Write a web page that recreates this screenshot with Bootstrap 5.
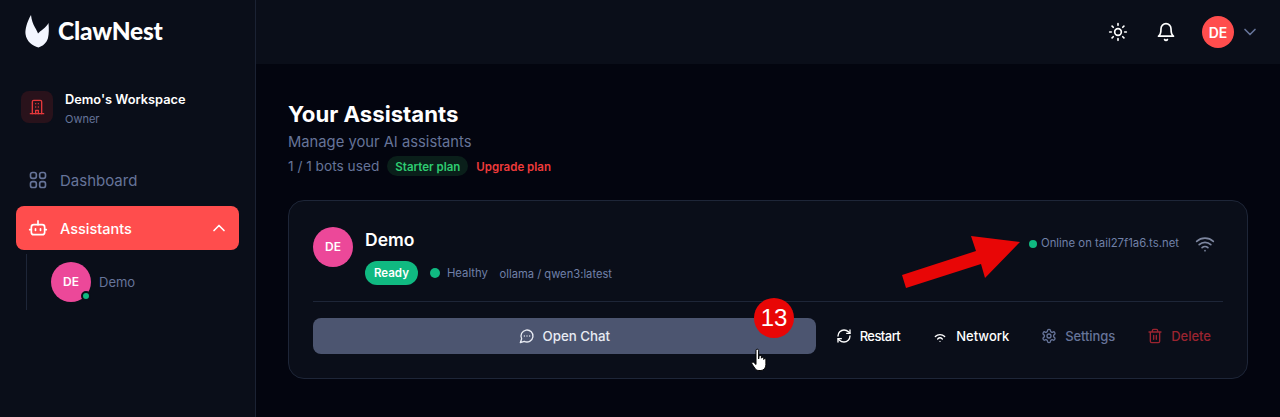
<!DOCTYPE html>
<html>
  <head>
    <title>ClawNest - Your Assistants</title>
    <link rel="stylesheet" href="https://cdn.jsdelivr.net/npm/bootstrap@5.3.3/dist/css/bootstrap.min.css" />
    <style>
      html, body { height: 100%; }
      body { background: #03050f; font-family: "Inter", "Liberation Sans", sans-serif; color: #fff; overflow: hidden; }
      svg.ico { fill: none; stroke: currentColor; stroke-width: 2; stroke-linecap: round; stroke-linejoin: round; flex-shrink: 0; }
      .app-shell { height: 417px; }
      .side-panel { width: 256px; background: #0a0e19; border-right: 1px solid #1b2233; flex-shrink: 0; }
      .brand-row { height: 62px; padding-left: 25px; gap: 9px; }
      .brand-name { font-family: "Lato", sans-serif; font-size: 24.5px; font-weight: 900; letter-spacing: -.2px; }
      .work-row { margin: 29px 21px 0; gap: 12px; }
      .work-icon { width: 32px; height: 32px; border-radius: 8px; background: #29121b; color: #e5383b; }
      .work-name { font-size: 12.8px; font-weight: 600; line-height: 18px; }
      .work-role { font-size: 11px; line-height: 16px; margin-top: 2px; color: #667499; }
      .side-nav { margin-top: 31px; padding: 0 16px; }
      .side-link { height: 44px; padding: 0 10px 0 12px; gap: 12px; font-size: 15px; color: #667499; border-radius: 8px; }
      .side-link.is-on { background: #ff4d4d; color: #fff; font-size: 14.5px; font-weight: 500; margin-top: 4px; }
      .sub-list { margin: 4px 0 0 10px; padding: 8px 0 8px 24px; border-left: 1px solid #1e2638; gap: 8px; font-size: 13px; color: #667499; }
      .txt-low { padding-top: 2px; }
      .ava { border-radius: 50%; color: #fff; font-weight: 600; }
      .ava-pink { width: 40px; height: 40px; background: #ec4899; font-size: 12px; }
      .ava-red { width: 32px; height: 32px; background: #ff4d4d; font-size: 14px; }
      .ava-dot { position: absolute; right: 0; bottom: 1px; width: 10px; height: 10px; border-radius: 50%; background: #10b981; border: 2px solid #0a0e19; }
      .top-strip { height: 64px; background: #0a0e19; padding-right: 20px; color: #fff; }
      .bell-ico { margin: 0 26px 0 28px; }
      .chev-ico { margin-left: 6px; }
      .main-pane { padding: 32px 32px 0; }
      .page-title { font-size: 22.2px; font-weight: 700; line-height: 35px; margin: 0 0 1px; }
      .page-sub { font-size: 14.75px; line-height: 20px; color: #667499; }
      .usage-row { margin-top: 4px; gap: 8px; font-size: 13.7px; color: #667499; height: 20px; }
      .plan-pill { background: #0a1f1a; color: #2ecc71; font-size: 11.5px; font-weight: 600; border-radius: 10px; padding: 2px 8px 0; line-height: 18px; }
      .plan-link { color: #ef3b3b; font-size: 11.5px; font-weight: 600; padding-top: 3px; }
      .bot-panel { margin-top: 24px; background: #0a0e19; border: 1px solid #1e2638; border-radius: 16px; padding: 24px; height: 179px; }
      .bot-avatar { margin-top: 2px; }
      .bot-info { margin-left: 12px; }
      .bot-name { font-size: 17.5px; font-weight: 600; line-height: 28px; margin-top: 1px; }
      .bot-meta { margin-top: 7px; }
      .ready-pill { background: #10b981; font-size: 11.5px; font-weight: 600; border-radius: 12px; height: 24px; padding: 2px 9px 0; }
      .meta-txt { font-size: 11.35px; color: #7080a8; }
      .dot-ok { border-radius: 50%; background: #10b981; }
      .dot-lg { width: 10px; height: 10px; margin: 0 7px 0 12px; }
      .dot-sm { width: 8px; height: 8px; margin-right: 4px; }
      .model-txt { margin-left: 11.5px; font-size: 11.2px; }
      .online-box { margin: 9px 8px 0 0; }
      .wifi-ico { margin-left: 16px; color: #7d869f; }
      .rule-line { border-top: 1px solid #1e2638; margin: 16px 0; opacity: 1; }
      .act-chat { height: 36px; background: #4c5570; border-radius: 8px; font-size: 13.3px; font-weight: 500; color: #e8ebf3; gap: 8px; }
      .act-btn { height: 36px; padding: 0 12px; gap: 8px; font-size: 13px; font-weight: 500; }
      .act-tight { letter-spacing: -.55px; }
      .act-snug { letter-spacing: -.1px; }
      .tone-white { color: #fff; }
      .tone-muted { color: #667499; }
      .tone-danger { color: #9b2430; }
      .mark-arrow { position: absolute; left: 0; top: 0; pointer-events: none; }
      .step-badge { position: absolute; left: 754px; top: 298px; width: 40px; height: 40px; border-radius: 50%; background: #e80606; color: #fff; font-family: "Liberation Sans", sans-serif; font-size: 24px; }
    </style>
  </head>
  <body>
    <div class="app-shell d-flex">
      <aside class="side-panel">
        <div class="brand-row d-flex align-items-center">
          <svg width="24" height="33" viewBox="0 0 24 33"><path fill="#f3f6ff" d="M6 0C6.500 5 8 9 10 12.500C11.500 15 12.500 17 13 18.500C15.500 15.500 21 13 23.500 8C24 14 24 18 23 23C21.500 28 18 31 13.500 32.500C7.500 31 1.500 26.500 .5 19C0 14 2 7 6 0Z"/></svg>
          <span class="brand-name">ClawNest</span>
        </div>
        <div class="work-row d-flex align-items-start">
          <div class="work-icon d-flex align-items-center justify-content-center">
            <svg class="ico" width="16" height="16" viewBox="0 0 24 24"><path d="M2 22h20"/><path d="M5 22V4a2 2 0 0 1 2-2h10a2 2 0 0 1 2 2v18"/><path d="M10 7h.01M14 7h.01M10 12h.01M14 12h.01"/><path d="M10 22v-5h4v5"/></svg>
          </div>
          <div>
            <div class="work-name">Demo's Workspace</div>
            <div class="work-role">Owner</div>
          </div>
        </div>
        <nav class="side-nav">
          <div class="side-link d-flex align-items-center">
            <svg class="ico" width="20" height="20" viewBox="0 0 24 24"><rect x="3" y="3" width="7" height="7" rx="2.500"/><rect x="14" y="3" width="7" height="7" rx="2.500"/><rect x="3" y="14" width="7" height="7" rx="2.500"/><rect x="14" y="14" width="7" height="7" rx="2.500"/></svg>
            <span class="txt-low">Dashboard</span>
          </div>
          <div class="side-link is-on d-flex align-items-center">
            <svg class="ico" width="20" height="20" viewBox="0 0 24 24"><path d="M12 8V3.500"/><rect x="4" y="8" width="16" height="12" rx="3"/><path d="M2 14h2M20 14h2M15 13v2M9 13v2"/></svg>
            <span class="flex-grow-1 txt-low">Assistants</span>
            <svg class="ico" width="20" height="20" viewBox="0 0 24 24"><path d="m18 15-6-6-6 6"/></svg>
          </div>
          <div class="sub-list d-flex align-items-center">
            <div class="position-relative">
              <div class="ava ava-pink d-flex align-items-center justify-content-center">DE</div>
              <span class="ava-dot"></span>
            </div>
            <span class="txt-low">Demo</span>
          </div>
        </nav>
      </aside>

      <div class="flex-grow-1">
        <header class="top-strip d-flex align-items-center justify-content-end">
          <svg class="ico" width="20" height="20" viewBox="0 0 24 24"><circle cx="12" cy="12" r="4"/><path d="M12 2v2M12 20v2M4.900 4.900l1.400 1.400M17.700 17.700l1.400 1.400M2 12h2M20 12h2M6.300 17.700l-1.400 1.400M19.100 4.900l-1.400 1.400"/></svg>
          <svg class="ico bell-ico" width="20" height="20" viewBox="0 0 24 24"><path d="M6 8a6 6 0 0 1 12 0c0 7 3 9 3 9H3s3-2 3-9"/><path d="M10.300 21a1.940 1.940 0 0 0 3.400 0"/></svg>
          <div class="ava ava-red d-flex align-items-center justify-content-center">DE</div>
          <svg class="ico tone-muted chev-ico" width="20" height="20" viewBox="0 0 24 24"><path d="m6 9 6 6 6-6"/></svg>
        </header>

        <main class="main-pane">
          <h1 class="page-title">Your Assistants</h1>
          <div class="page-sub">Manage your AI assistants</div>
          <div class="usage-row d-flex align-items-center">
            <span>1 / 1 bots used</span>
            <span class="plan-pill">Starter plan</span>
            <span class="plan-link">Upgrade plan</span>
          </div>

          <section class="bot-panel">
            <div class="d-flex align-items-start">
              <div class="ava ava-pink bot-avatar d-flex align-items-center justify-content-center">DE</div>
              <div class="bot-info flex-grow-1">
                <div class="bot-name">Demo</div>
                <div class="bot-meta d-flex align-items-center">
                  <span class="ready-pill d-flex align-items-center">Ready</span>
                  <span class="dot-ok dot-lg"></span>
                  <span class="meta-txt txt-low">Healthy</span>
                  <span class="meta-txt model-txt txt-low">ollama / qwen3:latest</span>
                </div>
              </div>
              <div class="online-box d-flex align-items-center meta-txt">
                <span class="dot-ok dot-sm"></span>
                <span>Online on tail27f1a6.ts.net</span>
                <svg class="ico wifi-ico" width="20" height="20" viewBox="0 0 24 24"><path d="M12 20h.01M2 8.820a15 15 0 0 1 20 0M5 12.859a10 10 0 0 1 14 0M8.500 16.429a5 5 0 0 1 7 0"/></svg>
              </div>
            </div>
            <hr class="rule-line">
            <div class="d-flex align-items-center gap-2">
              <div class="act-chat flex-grow-1 d-flex align-items-center justify-content-center">
                <svg class="ico" width="16" height="16" viewBox="0 0 24 24"><path d="M7.900 20A9 9 0 1 0 4 16.100L2 22Z"/><path d="M8 12h.01M12 12h.01M16 12h.01"/></svg>
                <span class="txt-low">Open Chat</span>
              </div>
              <div class="act-btn tone-white d-flex align-items-center">
                <svg class="ico" width="16" height="16" viewBox="0 0 24 24"><path d="M3 12a9 9 0 0 1 9-9 9.750 9.750 0 0 1 6.740 2.740L21 8"/><path d="M21 3v5h-5"/><path d="M21 12a9 9 0 0 1-9 9 9.750 9.750 0 0 1-6.740-2.740L3 16"/><path d="M8 16H3v5"/></svg>
                <span class="txt-low act-tight">Restart</span>
              </div>
              <div class="act-btn tone-white d-flex align-items-center">
                <svg class="ico" width="16" height="16" viewBox="0 0 24 24"><path d="M12 20h.01M5 12.859a10 10 0 0 1 14 0M8.500 16.429a5 5 0 0 1 7 0"/></svg>
                <span class="txt-low">Network</span>
              </div>
              <div class="act-btn tone-muted d-flex align-items-center">
                <svg class="ico" width="16" height="16" viewBox="0 0 24 24"><path d="M12.220 2h-.44a2 2 0 0 0-2 2v.18a2 2 0 0 1-1 1.730l-.43.25a2 2 0 0 1-2 0l-.15-.08a2 2 0 0 0-2.730.73l-.22.38a2 2 0 0 0 .73 2.730l.15.1a2 2 0 0 1 1 1.720v.51a2 2 0 0 1-1 1.740l-.15.09a2 2 0 0 0-.73 2.730l.22.38a2 2 0 0 0 2.730.73l.15-.08a2 2 0 0 1 2 0l.43.25a2 2 0 0 1 1 1.730V20a2 2 0 0 0 2 2h.44a2 2 0 0 0 2-2v-.18a2 2 0 0 1 1-1.730l.43-.25a2 2 0 0 1 2 0l.15.08a2 2 0 0 0 2.730-.73l.22-.39a2 2 0 0 0-.73-2.730l-.15-.08a2 2 0 0 1-1-1.740v-.5a2 2 0 0 1 1-1.740l.15-.09a2 2 0 0 0 .73-2.730l-.22-.38a2 2 0 0 0-2.730-.73l-.15.08a2 2 0 0 1-2 0l-.43-.25a2 2 0 0 1-1-1.730V4a2 2 0 0 0-2-2z"/><circle cx="12" cy="12" r="3"/></svg>
                <span class="txt-low act-snug">Settings</span>
              </div>
              <div class="act-btn tone-danger d-flex align-items-center">
                <svg class="ico" width="16" height="16" viewBox="0 0 24 24"><path d="M3 6h18M19 6v14a2 2 0 0 1-2 2H7a2 2 0 0 1-2-2V6M8 6V4a2 2 0 0 1 2-2h4a2 2 0 0 1 2 2v2M10 11v6M14 11v6"/></svg>
                <span class="txt-low">Delete</span>
              </div>
            </div>
          </section>
        </main>
      </div>
    </div>

    <!-- annotations lying over the screenshot -->
    <svg class="mark-arrow" width="1280" height="417" viewBox="0 0 1280 417">
      <polygon fill="#e80606" points="902,275 906,288 981,264 985,278 1020,242 971,236 976,251"/>
      <path fill="#fff" stroke="#000" stroke-width="1" stroke-linejoin="round" d="M756 350.500a1.300 1.300 0 0 1 2.600 0V359l.4-2.500a1.200 1.200 0 0 1 2.400.2v1.500a1.200 1.200 0 0 1 2.300 0v1.300a1.100 1.100 0 0 1 2.200.2v5c0 3-2 5.800-5 5.800h-2c-2 0-3-.8-4-2.200l-3-4.300c-.8-1.300 1-2.600 2-1.500l2.100 2z"/>
    </svg>
    <div class="step-badge d-flex align-items-center justify-content-center">13</div>

    <script src="https://cdn.jsdelivr.net/npm/bootstrap@5.3.3/dist/js/bootstrap.bundle.min.js"></script>
  </body>
</html>
